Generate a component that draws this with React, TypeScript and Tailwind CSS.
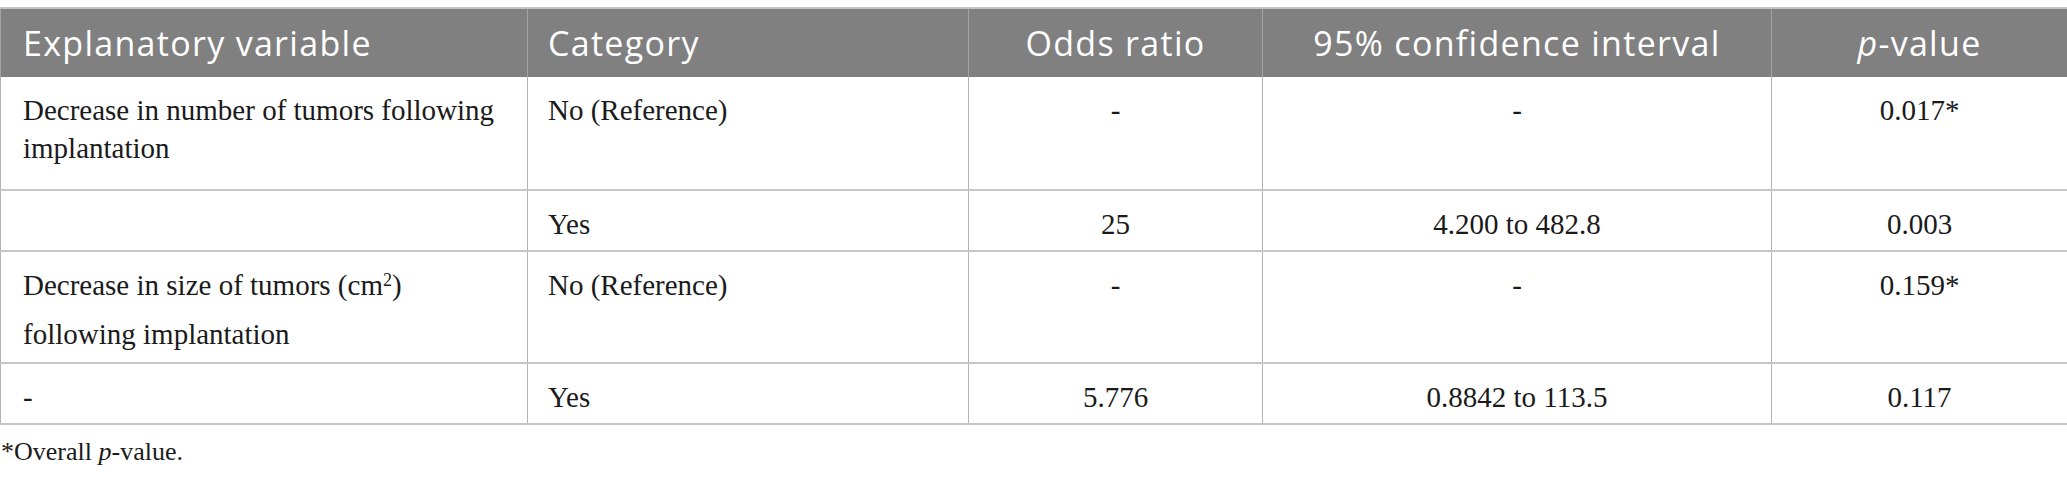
import React from "react";

const serif = { fontFamily: '"Liberation Serif", "Times New Roman", serif' };

const th =
  "h-[69px] bg-[#808080] text-white font-normal text-[34px] tracking-[1.3px] align-middle border-x border-x-[#a3a3a3] border-t-2 border-t-[#c4c4c4] px-[22px]";
const td =
  "align-top pt-[14px] px-[20px] text-[29px] leading-[38px] text-[#1a1a1a] border-x border-x-[#b3b3b3] border-b-2 border-b-[#c6c6c6]";

export default function App() {
  return (
    <div className="w-[2067px] h-[481px] bg-white pt-[7px]">
      <table className="border-collapse table-fixed w-[2067px]">
        <colgroup>
          <col className="w-[527px]" />
          <col className="w-[441px]" />
          <col className="w-[294px]" />
          <col className="w-[509px]" />
          <col className="w-[296px]" />
        </colgroup>
        <thead>
          <tr style={{ fontFamily: '"Open Sans", "Noto Sans", sans-serif' }}>
            <th className={`${th} text-left`}>Explanatory variable</th>
            <th className={`${th} text-left !px-[20px]`}>Category</th>
            <th className={`${th} text-center`}>Odds ratio</th>
            <th className={`${th} text-center`}>95% confidence interval</th>
            <th className={`${th} text-center`}>
              <i>p</i>-value
            </th>
          </tr>
        </thead>
        <tbody style={serif}>
          <tr className="h-[113px]">
            <td className={`${td} !pl-[22px]`}>Decrease in number of tumors following implantation</td>
            <td className={td}>No (Reference)</td>
            <td className={`${td} text-center`}>-</td>
            <td className={`${td} text-center`}>-</td>
            <td className={`${td} text-center`}>0.017*</td>
          </tr>
          <tr className="h-[61px]">
            <td className={`${td} !pl-[22px]`}></td>
            <td className={td}>Yes</td>
            <td className={`${td} text-center`}>25</td>
            <td className={`${td} text-center`}>4.200 to 482.8</td>
            <td className={`${td} text-center`}>0.003</td>
          </tr>
          <tr className="h-[112px]">
            <td className={`${td} !pl-[22px]`}>
              Decrease in size of tumors (cm
              <sup className="static top-0 inline-block text-[18px] align-[9px] leading-[18px] pb-[26px]">2</sup>) following implantation
            </td>
            <td className={td}>No (Reference)</td>
            <td className={`${td} text-center`}>-</td>
            <td className={`${td} text-center`}>-</td>
            <td className={`${td} text-center`}>0.159*</td>
          </tr>
          <tr className="h-[61px]">
            <td className={`${td} !pl-[22px]`}>-</td>
            <td className={td}>Yes</td>
            <td className={`${td} text-center`}>5.776</td>
            <td className={`${td} text-center`}>0.8842 to 113.5</td>
            <td className={`${td} text-center`}>0.117</td>
          </tr>
        </tbody>
      </table>
      <p className="mt-[11px] pl-[1px] text-[26px] leading-[32px] text-[#1a1a1a]" style={serif}>
        *Overall <i>p</i>-value.
      </p>
    </div>
  );
}
